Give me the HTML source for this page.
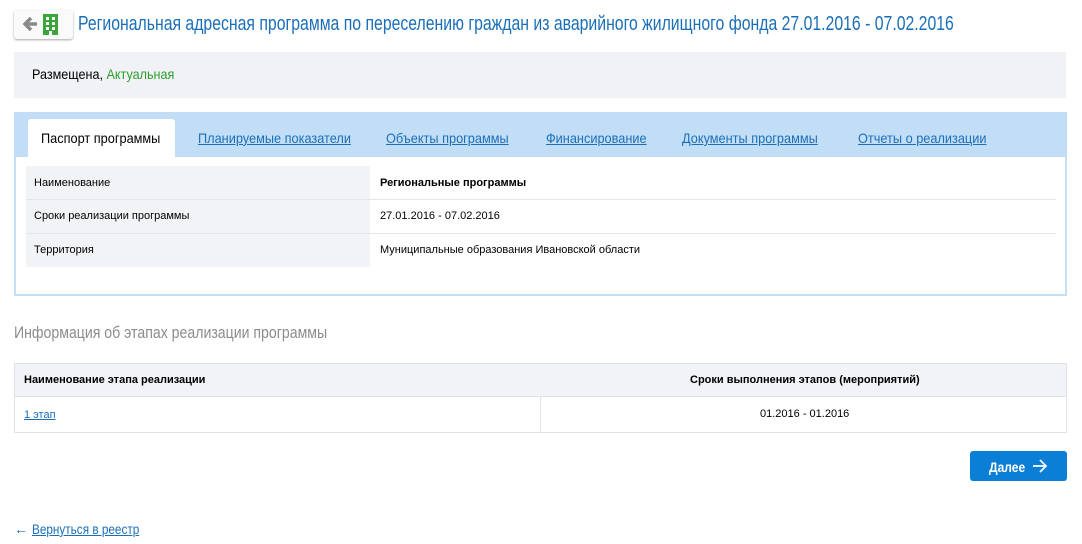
<!DOCTYPE html>
<html><head><meta charset="utf-8"><style>
*{margin:0;padding:0;box-sizing:border-box}
body{width:1082px;height:544px;background:#fff;font-family:"Liberation Sans",sans-serif;color:#000;position:relative;overflow:hidden}
.a{position:absolute}
.c{display:inline-block;transform:scaleX(.86);transform-origin:left center;white-space:nowrap}
a{color:#1a6fb8}
.tab{position:absolute;top:130px;font-size:14px;color:#1a6fb8;white-space:nowrap}
.tab .c{transform:scaleX(.91);text-decoration:underline}
.cell{position:absolute;font-size:11px;white-space:nowrap}
</style></head><body>
<div class="a" style="left:14px;top:10px;width:59px;height:29px;background:#fafafa;border-radius:3px;box-shadow:0 1px 2px rgba(0,0,0,.35)">
<svg width="59" height="29" viewBox="0 0 59 29"><path d="M11 14h12M17 8l-6 6 6 6" stroke="#8a8a8a" stroke-width="3.5" fill="none"/><rect x="29" y="4" width="15" height="21" fill="#3aa63a"/><g fill="#fff"><rect x="32" y="7" width="3" height="3"/><rect x="38" y="7" width="3" height="3"/><rect x="32" y="12" width="3" height="3"/><rect x="38" y="12" width="3" height="3"/><rect x="32" y="17" width="3" height="3"/><rect x="38" y="17" width="3" height="3"/><rect x="35" y="21" width="3" height="4"/></g></svg></div>
<div class="a" style="left:78px;top:13px;font-size:20px;color:#1a6fb8"><span class="c" style="transform:scaleX(.79)">Региональная адресная программа по переселению граждан из аварийного жилищного фонда 27.01.2016 - 07.02.2016</span></div>
<div class="a" style="left:14px;top:52px;width:1052px;height:46px;background:#f1f2f5"></div>
<div class="a" style="left:32px;top:66px;font-size:14px"><span class="c" style="transform:scaleX(.9)">Размещена, <span style="color:#2e9c2e">Актуальная</span></span></div>
<div class="a" style="left:14px;top:112px;width:1053px;height:184px;border:2px solid #c5dff5;border-top:0"></div>
<div class="a" style="left:14px;top:112px;width:1053px;height:45px;background:#c2def6"></div>
<div class="a" style="left:28px;top:119px;width:147px;height:39px;background:#fff;border-radius:3px 3px 0 0"></div>
<div class="tab" style="left:41px;color:#000"><span class="c" style="text-decoration:none">Паспорт программы</span></div>
<div class="tab" style="left:198px"><span class="c">Планируемые показатели</span></div>
<div class="tab" style="left:386px"><span class="c">Объекты программы</span></div>
<div class="tab" style="left:546px"><span class="c">Финансирование</span></div>
<div class="tab" style="left:682px"><span class="c">Документы программы</span></div>
<div class="tab" style="left:858px"><span class="c">Отчеты о реализации</span></div>
<div class="a" style="left:26px;top:166px;width:344px;height:101px;background:#f1f3f6"></div>
<div class="a" style="left:26px;top:199px;width:1030px;height:1px;background:#e2e6ea"></div>
<div class="a" style="left:26px;top:233px;width:1030px;height:1px;background:#e2e6ea"></div>
<div class="cell" style="left:34px;top:177px">Наименование</div>
<div class="cell" style="left:380px;top:177px;font-weight:bold">Региональные программы</div>
<div class="cell" style="left:34px;top:210px">Сроки реализации программы</div>
<div class="cell" style="left:380px;top:210px">27.01.2016 - 07.02.2016</div>
<div class="cell" style="left:34px;top:244px">Территория</div>
<div class="cell" style="left:380px;top:244px">Муниципальные образования Ивановской области</div>
<div class="a" style="left:14px;top:323px;font-size:17px;color:#8c8c8c"><span class="c" style="transform:scaleX(.83)">Информация об этапах реализации программы</span></div>
<div class="a" style="left:14px;top:363px;width:1053px;height:70px;border:1px solid #e0e4e8"></div>
<div class="a" style="left:15px;top:364px;width:1051px;height:33px;background:#f1f3f6;border-bottom:1px solid #e0e4e8"></div>
<div class="a" style="left:540px;top:397px;width:1px;height:35px;background:#e0e4e8"></div>
<div class="cell" style="left:24px;top:374px;font-weight:bold">Наименование этапа реализации</div>
<div class="cell" style="left:690px;top:374px;font-weight:bold">Сроки выполнения этапов (мероприятий)</div>
<div class="cell" style="left:24px;top:409px"><a href="#">1 этап</a></div>
<div class="cell" style="left:760px;top:408px">01.2016 - 01.2016</div>
<div class="a" style="left:970px;top:451px;width:97px;height:30px;background:#0b7ed6;border-radius:3px;color:#fff;font-size:14px;font-weight:bold;padding:8px 0 0 19px"><span class="c">Далее</span><svg class="a" style="left:62px;top:8px" width="16" height="14" viewBox="0 0 16 14"><path d="M1 7h13M8 1l6 6-6 6" stroke="#fff" stroke-width="1.8" fill="none"/></svg></div>
<div class="a" style="left:14px;top:521px;font-size:14px;color:#1a6fb8">← <span class="c" style="text-decoration:underline;transform:scaleX(.84)">Вернуться в реестр</span></div>
</body></html>
